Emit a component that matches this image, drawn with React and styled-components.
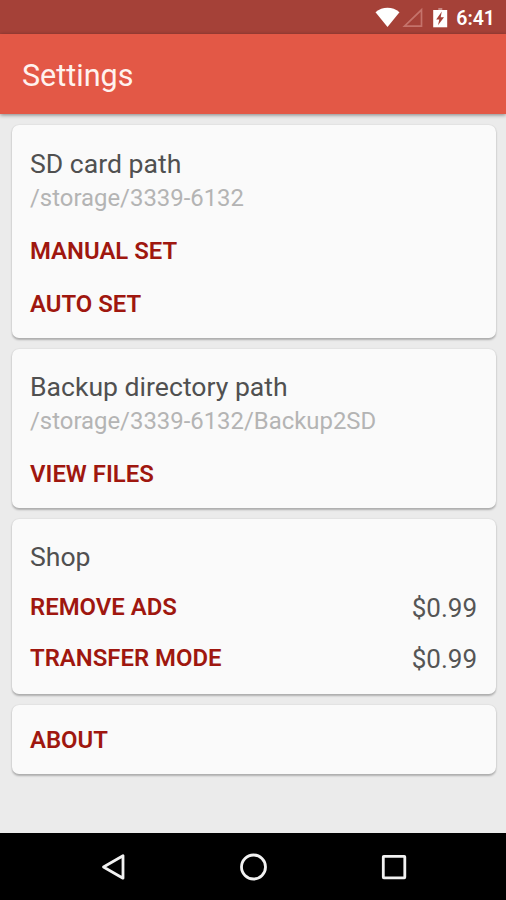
import React from "react";
import styled, { createGlobalStyle } from "styled-components";

const GlobalStyle = createGlobalStyle`
  * { box-sizing: border-box; }
  body { margin: 0; background: #ebebeb; }
`;

const Screen = styled.div`
  display: flex;
  flex-direction: column;
  width: 506px;
  height: 900px;
  background: #ebebeb;
  font-family: Roboto, sans-serif;
  overflow: hidden;
`;

const StatusBar = styled.header`
  display: flex;
  align-items: center;
  justify-content: flex-end;
  flex: none;
  height: 34px;
  padding-right: 11px;
  background: #a54138;
  color: #fff;
`;

const StatusIcons = styled.svg`
  display: block;
  width: 76px;
  height: 34px;
  margin-right: 5px;
`;

const Clock = styled.span`
  font-size: 19.5px;
  font-weight: 600;
  line-height: 34px;
  padding-top: 3px;
`;

const AppBar = styled.div`
  display: flex;
  align-items: center;
  flex: none;
  height: 80px;
  padding: 4px 22px 0;
  background: #e35846;
  box-shadow: 0 1px 4px rgba(0, 0, 0, 0.45);
`;

const AppTitle = styled.h1`
  margin: 0;
  font-size: 30.5px;
  font-weight: 400;
  line-height: 36px;
  color: #fff2ee;
`;

const Content = styled.main`
  display: flex;
  flex-direction: column;
  flex: 1;
  gap: 11px;
  padding: 11px 10px 0 12px;
`;

const Card = styled.section`
  height: ${(p) => p.$height}px;
  padding: ${(p) => p.$top}px 19px 0 18px;
  border-radius: 7px;
  background: #fafafa;
  box-shadow: 0 1.5px 2px rgba(0, 0, 0, 0.25), 0 0 2px rgba(0, 0, 0, 0.08);
`;

const CardTitle = styled.h2`
  margin: 0;
  font-size: 26.6px;
  font-weight: 400;
  line-height: 34px;
  color: #505050;
`;

const Path = styled.p`
  margin: 0 0 9px;
  font-size: 23.9px;
  line-height: 34px;
  color: #b4b4b4;
`;

const Row = styled.div`
  display: flex;
  align-items: center;
  justify-content: space-between;
  height: ${(p) => p.$height}px;
`;

const Action = styled.button`
  padding: 0;
  border: 0;
  background: none;
  font: 600 23.9px/30px Roboto, sans-serif;
  color: #9f170f;
`;

const Price = styled.span`
  padding-top: 1px;
  font-size: 26px;
  line-height: 30px;
  color: #555;
`;

const NavBar = styled.nav`
  display: flex;
  justify-content: center;
  align-items: center;
  flex: none;
  gap: 108px;
  height: 67px;
  padding-left: 1px;
  background: #000;
`;

const NavIcon = styled.svg`
  display: block;
  width: 32px;
  height: 32px;
  fill: none;
  stroke: #f2f2f2;
  stroke-width: 2.8;
  stroke-linejoin: round;
`;

export default function App() {
  return (
    <Screen>
      <GlobalStyle />
      <StatusBar>
        <StatusIcons viewBox="0 0 76 34">
          <path d="M0.5 12.2C7.5 6.4 17.5 6.4 24.5 12.2L12.5 27Z" fill="#fff" />
          <path d="M29.5 26.2H46.5V9.8Z" fill="none" stroke="#c5736b" strokeWidth="1.7" />
          <path d="M63.3 8H67.3V10H63.3Z" fill="#c98a84" />
          <path d="M58.2 10H72.2V27.3H58.2Z" fill="#fff" />
          <path d="M66.8 11.5L61.2 19.5H64.3L63 25.3L69 17.3H65.7Z" fill="#a54138" />
        </StatusIcons>
        <Clock>6:41</Clock>
      </StatusBar>
      <AppBar>
        <AppTitle>Settings</AppTitle>
      </AppBar>
      <Content>
        <Card $height={213} $top={22}>
          <CardTitle>SD card path</CardTitle>
          <Path>/storage/3339-6132</Path>
          <Row $height={53}><Action>MANUAL SET</Action></Row>
          <Row $height={53}><Action>AUTO SET</Action></Row>
        </Card>
        <Card $height={159} $top={21}>
          <CardTitle>Backup directory path</CardTitle>
          <Path>/storage/3339-6132/Backup2SD</Path>
          <Row $height={53}><Action>VIEW FILES</Action></Row>
        </Card>
        <Card $height={175} $top={21}>
          <CardTitle>Shop</CardTitle>
          <Row $height={66}><Action>REMOVE ADS</Action><Price>$0.99</Price></Row>
          <Row $height={36}><Action>TRANSFER MODE</Action><Price>$0.99</Price></Row>
        </Card>
        <Card $height={69} $top={8}>
          <Row $height={54}><Action>ABOUT</Action></Row>
        </Card>
      </Content>
      <NavBar>
        <NavIcon viewBox="0 0 32 32"><path d="M5.5 16L25 4.8V27.2Z" /></NavIcon>
        <NavIcon viewBox="0 0 32 32"><circle cx="15.5" cy="16" r="12" /></NavIcon>
        <NavIcon viewBox="0 0 32 32"><rect x="5.3" y="5.3" width="21.5" height="21.5" rx="0.5" /></NavIcon>
      </NavBar>
    </Screen>
  );
}
